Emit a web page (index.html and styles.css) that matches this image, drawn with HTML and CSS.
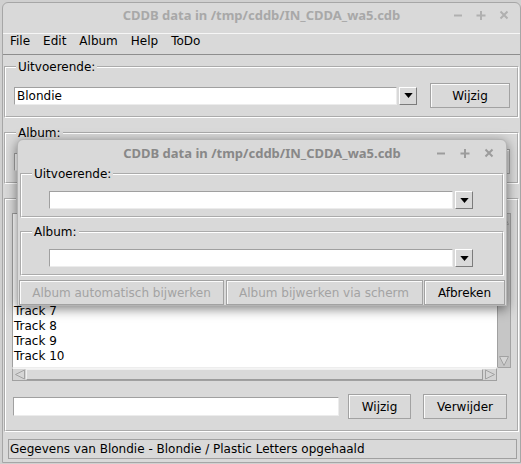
FILE: index.html
```html
<!DOCTYPE html>
<html lang="nl">
<head>
<meta charset="utf-8">
<title>CDDB data</title>
<link rel="stylesheet" href="styles.css">
</head>
<body>
<div class="win">
  <div class="titlebar">
    <span class="spacer"></span>
    <span class="title">CDDB data in /tmp/cddb/IN_CDDA_wa5.cdb</span>
    <span class="wm-btns">
      <span class="wm"><svg viewBox="0 0 12 12" width="12" height="12"><path d="M2 6.5H10"/></svg></span>
      <span class="wm"><svg viewBox="0 0 12 12" width="12" height="12"><path d="M1.5 6.5H10.5M6 2V11"/></svg></span>
      <span class="wm"><svg viewBox="0 0 12 12" width="12" height="12"><path d="M2.5 2.5L9.5 9.5M9.5 2.5L2.5 9.5"/></svg></span>
    </span>
  </div>
  <div class="menubar">
    <span>File</span><span>Edit</span><span>Album</span><span>Help</span><span>ToDo</span>
  </div>
  <div class="content">
    <fieldset class="frame f-first">
      <legend>Uitvoerende:</legend>
      <div class="row">
        <div class="entry e-combo">Blondie</div>
        <div class="drop"><svg viewBox="0 0 10 6" width="9" height="5"><path d="M0 0H10L5 6Z"/></svg></div>
        <div class="btn b-side">Wijzig</div>
      </div>
    </fieldset>
    <fieldset class="frame f-next">
      <legend>Album:</legend>
      <div class="row">
        <div class="entry e-combo"></div>
        <div class="drop"><svg viewBox="0 0 10 6" width="9" height="5"><path d="M0 0H10L5 6Z"/></svg></div>
        <div class="btn b-side"></div>
      </div>
    </fieldset>
    <fieldset class="frame f-next f-tracks">
      <legend class="blank-legend"></legend>
      <div class="listarea">
        <div class="listrow">
          <div class="listbox">
            <div class="blank"></div><div class="blank"></div><div class="blank"></div>
            <div class="blank"></div><div class="blank"></div><div class="blank"></div>
            <div>Track 7</div><div>Track 8</div><div>Track 9</div><div>Track 10</div>
          </div>
          <div class="vscroll">
            <svg viewBox="0 0 12 12" width="12" height="12"><path d="M1.5 10.5H10.5L6 1.5Z"/></svg>
            <svg viewBox="0 0 12 12" width="12" height="12"><path d="M1.5 1.5H10.5L6 10.5Z"/></svg>
          </div>
        </div>
        <div class="hscroll">
          <span class="harrow"><svg viewBox="0 0 12 11" width="12" height="11"><path d="M10.5 1V10L1.5 5.5Z"/></svg></span>
          <span class="hthumb"></span>
          <span class="harrow"><svg viewBox="0 0 12 11" width="12" height="11"><path d="M1.5 1V10L10.5 5.5Z"/></svg></span>
        </div>
      </div>
      <div class="editrow">
        <div class="entry e-track"></div>
        <div class="btn b-wijzig">Wijzig</div>
        <div class="btn b-verwijder">Verwijder</div>
      </div>
    </fieldset>
    <div class="status">Gegevens van Blondie - Blondie / Plastic Letters opgehaald</div>
  </div>
</div>

<div class="dialog">
  <div class="titlebar d-titlebar">
    <span class="spacer"></span>
    <span class="title">CDDB data in /tmp/cddb/IN_CDDA_wa5.cdb</span>
    <span class="wm-btns">
      <span class="wm"><svg viewBox="0 0 12 12" width="12" height="12"><path d="M2 6.5H10"/></svg></span>
      <span class="wm"><svg viewBox="0 0 12 12" width="12" height="12"><path d="M1.5 6.5H10.5M6 2V11"/></svg></span>
      <span class="wm"><svg viewBox="0 0 12 12" width="12" height="12"><path d="M2.5 2.5L9.5 9.5M9.5 2.5L2.5 9.5"/></svg></span>
    </span>
  </div>
  <fieldset class="frame d-frame">
    <legend>Uitvoerende:</legend>
    <div class="d-row">
      <div class="entry e-dialog"></div>
      <div class="drop"><svg viewBox="0 0 10 6" width="9" height="5"><path d="M0 0H10L5 6Z"/></svg></div>
    </div>
  </fieldset>
  <fieldset class="frame d-frame d-next">
    <legend>Album:</legend>
    <div class="d-row">
      <div class="entry e-dialog"></div>
      <div class="drop"><svg viewBox="0 0 10 6" width="9" height="5"><path d="M0 0H10L5 6Z"/></svg></div>
    </div>
  </fieldset>
  <div class="d-buttons">
    <div class="btn disabled b-auto">Album automatisch bijwerken</div>
    <div class="btn disabled b-screen">Album bijwerken via scherm</div>
    <div class="btn b-abort">Afbreken</div>
  </div>
</div>
</body>
</html>
```

FILE: styles.css
```css
* { box-sizing: border-box; }
html, body { margin: 0; }
body {
  width: 521px;
  height: 464px;
  overflow: hidden;
  position: relative;
  background: #d0d0d0;
  padding: 2px 0 0 2px;
  font: 12px/14px "DejaVu Sans", sans-serif;
  color: #000;
}

.win {
  width: 519px;
  height: 461px;
  background: #d9d9d9;
  border: 1px solid #a6a6a6;
  border-radius: 6px 6px 0 0;
  display: flex;
  flex-direction: column;
}

.titlebar {
  height: 30px;
  flex: none;
  display: grid;
  grid-template-columns: 1fr auto 1fr;
  align-items: start;
  padding-top: 2px;
}
.title {
  font: bold 13px/20px "Noto Sans", sans-serif;
  color: #a8a8a8;
  white-space: nowrap;
}
.wm-btns {
  justify-self: end;
  display: flex;
  padding-right: 5px;
  height: 20px;
  align-items: center;
}
.wm {
  width: 23px;
  display: flex;
  justify-content: center;
}
.wm svg path {
  stroke: #b0b0b0;
  stroke-width: 2;
  fill: none;
}

.menubar {
  height: 22px;
  flex: none;
  border-top: 1px solid #f6f6f6;
  border-bottom: 1px solid #8e8e8e;
  display: flex;
  gap: 13px;
  padding-left: 7px;
  line-height: 14px;
}

.content {
  display: flex;
  flex-direction: column;
  padding: 0 1px;
}

.frame {
  margin: 0;
  padding: 0;
  min-width: 0;
  border: 2px groove #ffffff;
}
.frame legend {
  padding: 0 2px;
  margin-left: 10px;
  line-height: 16px;
}
.frame legend.blank-legend {
  height: 16px;
  width: 50px;
}
.f-first { margin-top: 4px; }
.f-next { margin-top: 7px; }

.row {
  display: flex;
  align-items: center;
  padding: 8px 7px 8px 8px;
}

.entry {
  background: #fff;
  border-style: solid;
  border-width: 1px;
  border-color: #a0a0a0 #ececec #ececec #a0a0a0;
  padding-left: 2px;
  line-height: 16px;
  white-space: nowrap;
  overflow: hidden;
}
.e-combo { width: 383px; height: 18px; }

.drop {
  width: 18px;
  height: 18px;
  margin-left: 2px;
  background: #d9d9d9;
  border-style: solid;
  border-width: 1px;
  border-color: #ffffff #7c7c7c #7c7c7c #ffffff;
  display: flex;
  align-items: center;
  justify-content: center;
}
.drop svg path { fill: #000; }

.btn {
  height: 25px;
  border: 1px solid #a2a2a2;
  box-shadow: inset 1px 1px 0 #fbfbfb;
  display: flex;
  align-items: center;
  justify-content: center;
  white-space: nowrap;
  background: #d9d9d9;
}
.b-side { width: 80px; margin-left: auto; }

.listarea { padding: 6px 6px 0 6px; }
.listrow {
  display: flex;
  height: 155px;
}
.listbox {
  flex: 1;
  background: #fff;
  border-style: solid;
  border-width: 1px;
  border-color: #a0a0a0 #a0a0a0 #ededed #a0a0a0;
  padding-left: 1px;
  line-height: 15px;
  overflow: hidden;
}
.listbox .blank { height: 15px; }
.vscroll {
  width: 13px;
  background: #c6c6c6;
  border-style: solid;
  border-width: 1px 1px 1px 0;
  border-color: #a3a3a3;
  display: flex;
  flex-direction: column;
  justify-content: space-between;
}
.vscroll svg path, .harrow svg path {
  fill: #d6d6d6;
  stroke: #a2a2a2;
  stroke-width: 1;
}
.hscroll {
  height: 13px;
  width: 485px;
  display: flex;
  border-style: solid;
  border-width: 1px;
  border-color: #f4f4f4 #a0a0a0 #a0a0a0 #a0a0a0;
  background: #d4d4d4;
}
.harrow {
  width: 13px;
  display: flex;
  align-items: center;
  justify-content: center;
}
.hthumb {
  flex: 1;
  border-style: solid;
  border-width: 1px;
  border-color: #f0f0f0 #9c9c9c #9c9c9c #f0f0f0;
  background: #d9d9d9;
}

.editrow {
  display: flex;
  align-items: center;
  padding: 13px 9px 11px 7px;
}
.e-track { width: 326px; height: 19px; }
.b-wijzig { width: 63px; margin-left: 9px; }
.b-verwijder { width: 84px; margin-left: 12px; }

.status {
  margin: 7px 2px 0 4px;
  height: 20px;
  border: 1px solid #a0a0a0;
  padding-left: 1px;
  line-height: 18px;
  white-space: nowrap;
}

/* dialog window */
.dialog {
  position: absolute;
  left: 17px;
  top: 139px;
  width: 490px;
  height: 167px;
  background: #d9d9d9;
  border: 1px solid #b4b4b4;
  border-radius: 6px 6px 0 0;
  box-shadow: 0 3px 12px rgba(0, 0, 0, 0.5);
  padding: 0 1px;
  display: flex;
  flex-direction: column;
}
.d-titlebar {
  height: 26px;
  padding-top: 3px;
}
.d-titlebar .title { color: #888888; }
.d-titlebar .wm-btns { padding-right: 4px; }
.d-titlebar .wm { width: 24px; }
.d-titlebar .wm svg path { stroke: #9c9c9c; }

.d-frame { margin: 0 1px; }
.d-next { margin-top: 6px; }
.d-row {
  display: flex;
  align-items: center;
  padding: 9px 29px 7px 27px;
}
.e-dialog { width: 404px; height: 18px; }

.d-buttons {
  margin-top: 4px;
  display: flex;
  justify-content: space-between;
}
.disabled { color: #a3a3a3; }
.b-auto { width: 205px; }
.b-screen { width: 197px; }
.b-abort { width: 81px; }
```
